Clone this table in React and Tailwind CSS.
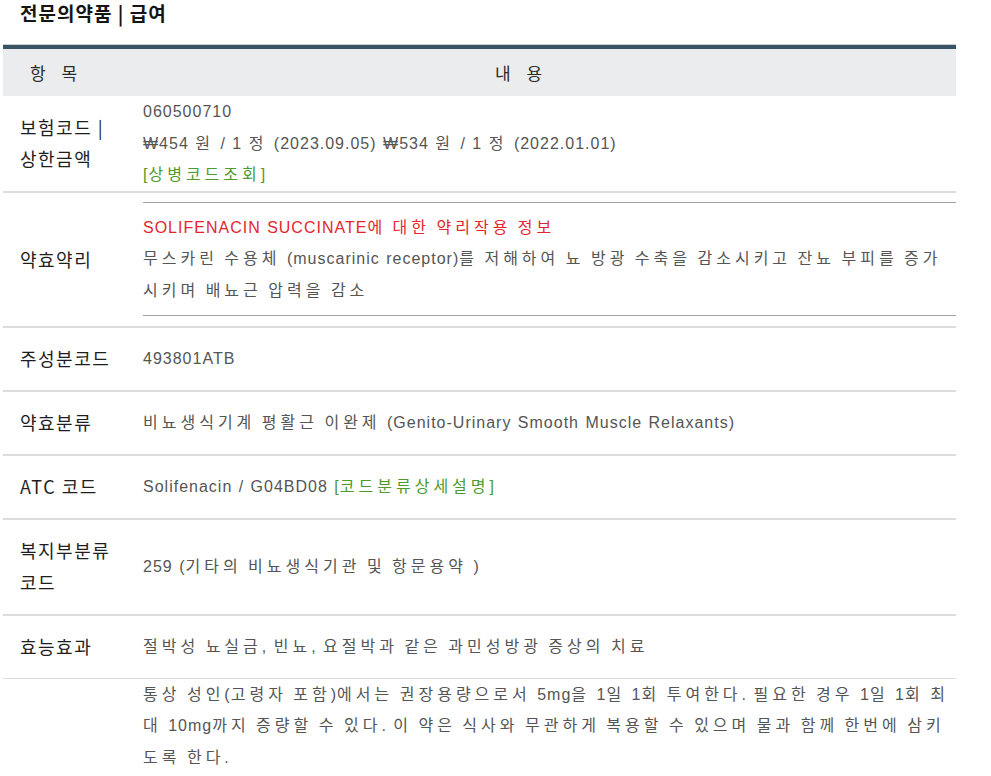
const FONT = { fontFamily: '"Noto Sans CJK KR", "Noto Sans", sans-serif' };
const BODY = { fontFamily: '"Liberation Sans", "Noto Sans CJK KR", sans-serif', wordSpacing: '1px' };

// Hangul glyphs in the original font sit on a wide advance; widen just those runs
function T({ children }) {
  const parts = String(children).split(/([\uAC00-\uD7A3]+)/);
  return parts.map((p, i) =>
    i % 2 === 1 ? (
      <span key={i} className="tracking-[4px]">
        {p}
      </span>
    ) : (
      p
    )
  );
}

function Row({ label, children, className = 'border-b-2 border-[#dddddd]', cellClass = 'py-[15.25px]' }) {
  return (
    <div className={`grid grid-cols-[140px_1fr] ${className}`}>
      <div className="flex items-center py-[15.25px] pl-[17px] pr-[10px] text-[18px] tracking-[1.5px] leading-[31.5px] text-[#1e1e1e] break-keep">
        {label}
      </div>
      <div className={`self-center text-[16px] tracking-[1px] leading-[31.5px] text-[#555555] ${cellClass}`} style={BODY}>
        {children}
      </div>
    </div>
  );
}

export default function App() {
  return (
    <div className="bg-white w-[991px] h-[776px] overflow-hidden" style={FONT}>
      {/* title */}
      <h1 className="pl-[20px] text-[19px] tracking-[1px] font-bold leading-[26px] text-[#151515] mb-[19px]">
        전문의약품 | 급여
      </h1>

      <div className="ml-[3px] w-[953px]">
        {/* header */}
        <div className="grid grid-cols-[140px_1fr] h-[51px] items-center bg-[#ebeced] border-t-4 border-[#3b5465] shadow-[0_-1px_0_#c8cdd1] text-[17px] text-[#2a2a2a]">
          <div className="pl-[27px] tracking-[6px]">항 목</div>
          <div className="pl-[352px] tracking-[6px]">내 용</div>
        </div>

        <Row label="보험코드 | 상한금액" cellClass="py-0">
          <div>060500710</div>
          <div>
            <T>₩454 원 / 1 정 (2023.09.05) ₩534 원 / 1 정 (2022.01.01)</T>
          </div>
          <div className="text-[#4f9a2c]">
            <T>[상병코드조회]</T>
          </div>
        </Row>

        <Row label="약효약리" cellClass="pt-[9px] pb-[10px]">
          <div className="border-t border-[#a3a3a3]" />
          <div className="my-[9px]">
            <div className="text-[#e4262c]">
              <T>SOLIFENACIN SUCCINATE에 대한 약리작용 정보</T>
            </div>
            <div>
              <T>무스카린 수용체 (muscarinic receptor)를 저해하여 뇨 방광 수축을 감소시키고 잔뇨 부피를 증가</T>
              <br />
              <T>시키며 배뇨근 압력을 감소</T>
            </div>
          </div>
          <div className="border-t border-[#a3a3a3]" />
        </Row>

        <Row label="주성분코드">493801ATB</Row>

        <Row label="약효분류">
          <T>비뇨생식기계 평활근 이완제 (Genito-Urinary Smooth Muscle Relaxants)</T>
        </Row>

        <Row label="ATC 코드">
          Solifenacin / G04BD08{' '}
          <span className="text-[#4f9a2c]">
            <T>[코드분류상세설명]</T>
          </span>
        </Row>

        <Row label="복지부분류 코드">
          <T>259 (기타의 비뇨생식기관 및 항문용약 )</T>
        </Row>

        <Row label="효능효과" className="border-b border-[#dddddd]">
          <T>절박성 뇨실금, 빈뇨, 요절박과 같은 과민성방광 증상의 치료</T>
        </Row>

        <Row label="" className="" cellClass="py-0">
          <T>통상 성인(고령자 포함)에서는 권장용량으로서 5mg을 1일 1회 투여한다. 필요한 경우 1일 1회 최</T>
          <br />
          <T>대 10mg까지 증량할 수 있다. 이 약은 식사와 무관하게 복용할 수 있으며 물과 함께 한번에 삼키</T>
          <br />
          <T>도록 한다.</T>
        </Row>
      </div>
    </div>
  );
}
